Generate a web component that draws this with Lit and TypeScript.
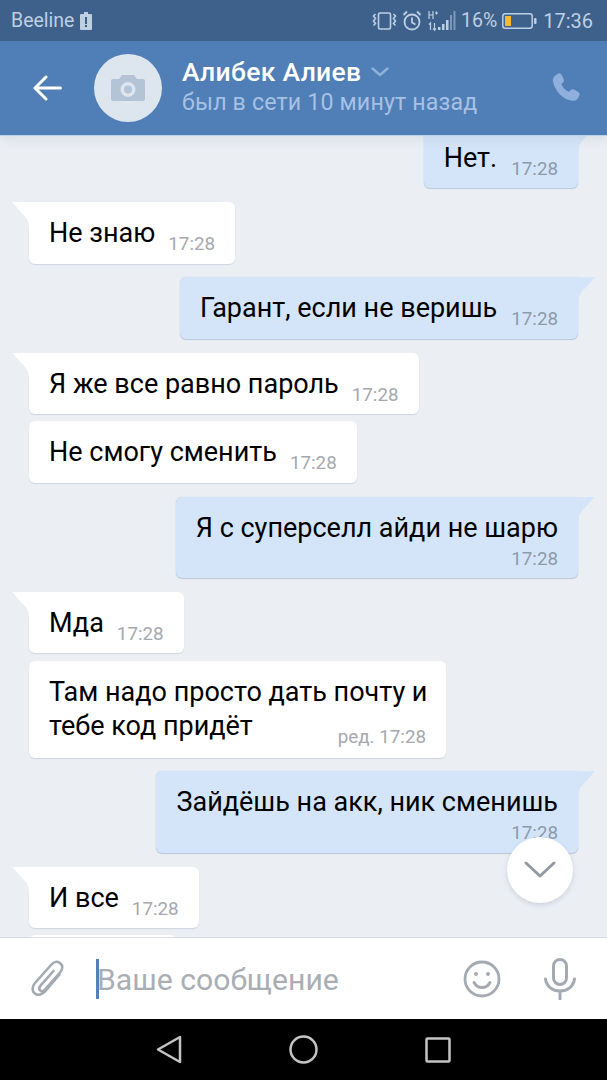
import { LitElement, html, css } from "lit";
import { customElement } from "lit/decorators.js";

type Msg = { out?: boolean; text: string; last?: string; time?: string; tail?: boolean; stack?: boolean; near?: boolean };

const msgs: Msg[] = [
  { out: true, text: "Нет.", tail: true },
  { text: "Не знаю", tail: true },
  { out: true, text: "Гарант, если не веришь", tail: true },
  { text: "Я же все равно пароль", tail: true },
  { text: "Не смогу сменить", near: true },
  { out: true, text: "Я с суперселл айди не шарю", tail: true, stack: true },
  { text: "Мда", tail: true },
  { text: "Там надо просто дать почту и", last: "тебе код придёт", near: true, time: "ред. 17:28" },
  { out: true, text: "Зайдёшь на акк, ник сменишь", tail: true, stack: true },
  { text: "И все", tail: true },
];

@customElement("app-root")
export class AppRoot extends LitElement {
  static styles = css`
    :host { display: block; width: 607px; height: 1080px; font-family: Roboto, "Noto Sans", sans-serif; overflow: hidden; }
    .page { height: 1080px; display: flex; flex-direction: column; background: #ebeff4; }
    .status { height: 41px; flex: none; background: #3e618c; color: #bfcfe2; display: flex; align-items: center; padding: 0 14px 0 11px; font-size: 19.5px; position: relative; z-index: 3; }
    .status svg { display: block; flex: none; }
    .warn { margin-left: 6px; }
    .spacer { flex: 1; }
    .vib { margin-right: 5px; }
    .alarm { margin-right: 6px; }
    .sig { margin-right: 5px; }
    .pct { font-size: 19.5px; margin-right: 5px; }
    .batt { margin-right: 6px; }
    .clock { font-size: 20px; }
    .header { height: 94px; flex: none; background: #507eb7; display: flex; align-items: center; position: relative; z-index: 2; box-shadow: 0 1px 0 #bcd0ea, 0 3px 12px rgba(60, 80, 110, 0.12); padding-left: 33px; box-sizing: border-box; }
    .back { margin-right: 32px; }
    .avatar { width: 68px; height: 68px; border-radius: 50%; background: #dde5ee; display: flex; align-items: center; justify-content: center; margin-right: 20px; flex: none; }
    .who { flex: 1; min-width: 0; margin-top: -2px; }
    .name { display: flex; align-items: center; gap: 10px; color: #fff; font-size: 26.5px; font-weight: 500; line-height: 30px; letter-spacing: 0.3px; }
    .seen { color: #a6c1e3; font-size: 23.2px; line-height: 31px; letter-spacing: 0.15px; }
    .phone { margin-right: 25px; flex: none; }
    .thread { flex: 1; min-height: 0; overflow: hidden; position: relative; }
    .list { display: flex; flex-direction: column; margin-top: -8.25px; padding: 0 29px; }
    .msg { position: relative; box-sizing: border-box; background: #fff; border-radius: 6px; box-shadow: 0 1px 1px rgba(60, 80, 110, 0.16); color: #000; font-size: 27px; line-height: 34px; height: 61.5px; padding: 14px 20px 0 20px; margin-top: 13.75px; align-self: flex-start; display: flex; gap: 13px; }
    .msg.near { margin-top: 7.25px; }
    .msg.first { margin-top: 0; }
    .msg.out { background: #d5e5f9; align-self: flex-end; gap: 14px; box-shadow: 0 1px 1px rgba(90, 120, 160, 0.3), 0 0 1px rgba(90, 120, 160, 0.35); }
    .msg.tail { border-top-left-radius: 0; }
    .msg.out.tail { border-top-left-radius: 6px; border-top-right-radius: 0; }
    .msg.wrap { height: 97px; width: 417px; flex-direction: column; gap: 0; }
    .msg.stack { height: 81.5px; flex-direction: column; gap: 0; }
    .lastrow { display: flex; justify-content: space-between; }
    .tailshape { position: absolute; top: 0; left: -17px; width: 17px; height: 26px; background: #fff; clip-path: polygon(0 0, 100% 0, 100% 100%, 96% 78%, 84% 62%); }
    .out .tailshape { left: auto; right: -17px; background: #d5e5f9; clip-path: polygon(0 0, 100% 0, 16% 62%, 4% 78%, 0 100%); }
    .text { flex: none; white-space: nowrap; }
    .time { flex: none; font-size: 18.8px; line-height: 20px; color: #a5a9ae; margin-top: 18px; white-space: nowrap; }
    .out .time { color: #8b9bab; }
    .stack .time { margin-top: 4px; align-self: flex-end; }
    .ghost { width: 148px; }
    .fab { position: absolute; right: 34px; bottom: 34px; width: 66px; height: 66px; border-radius: 50%; background: #fff; box-shadow: 0 2px 5px rgba(60, 80, 110, 0.18); display: flex; align-items: center; justify-content: center; }
    .inputbar { height: 82px; flex: none; background: #fff; border-top: 1px solid #d9dce0; box-sizing: border-box; display: flex; align-items: center; padding: 0 31px; position: relative; z-index: 1; }
    .clip { margin-right: 31px; }
    .field { flex: 1; display: flex; align-items: center; color: #a9aeb4; font-size: 30.2px; line-height: 40px; }
    .fieldtext { position: relative; top: 1px; }
    .caret { width: 3px; height: 40px; background: #5181b8; margin-right: -2px; flex: none; }
    .smile { margin-right: 43px; }
    .nav { height: 61px; flex: none; background: #000; display: flex; align-items: center; justify-content: center; gap: 107px; }
  `;

  private bubble(m: Msg, first: boolean) {
    const cls = ["msg", m.out ? "out" : "", m.tail ? "tail" : "", m.near ? "near" : "", m.stack ? "stack" : "", m.last ? "wrap" : "", first ? "first" : ""].join(" ");
    const time = html`<span class="time">${m.time ?? "17:28"}</span>`;
    return html`<div class=${cls}>
      ${m.tail ? html`<span class="tailshape"></span>` : ""}
      <span class="text">${m.text}</span>
      ${m.last ? html`<div class="lastrow"><span class="text">${m.last}</span>${time}</div>` : time}
    </div>`;
  }

  render() {
    return html`<div class="page">
      <div class="status">
        <span>Beeline</span>
        <svg class="warn" width="12" height="20" viewBox="0 0 12 20"><path fill="#bfcfe2" d="M4 1h4v2h3a1 1 0 0 1 1 1v14a1 1 0 0 1-1 1H1a1 1 0 0 1-1-1V4a1 1 0 0 1 1-1h3z"/><path fill="#3e618c" d="M5 6h2v7H5zM5 14h2v2H5z"/></svg>
        <span class="spacer"></span>
        <svg class="vib" width="25" height="20" viewBox="0 0 25 20" fill="none" stroke="#bfcfe2" stroke-width="1.6"><rect x="6.500" y="2" width="12" height="16" rx="1.500"/><path d="M3.500 3l-2 2 2 2.500-2 2.500 2 2.500-2 2M21.500 3l2 2-2 2.500 2 2.500-2 2.500 2 2"/></svg>
        <svg class="alarm" width="20" height="21" viewBox="0 0 20 21" fill="none" stroke="#bfcfe2" stroke-width="1.8"><circle cx="10" cy="12" r="7.500"/><path d="M10 7.500V12.500l3.500 2M1.500 5L5 1.500M18.500 5L15 1.500"/></svg>
        <svg class="sig" width="28" height="22" viewBox="0 0 28 22" fill="#bfcfe2"><path d="M1 1v8M5 1v8M1 5h4M7 3h3M8.500 1.500v3" fill="none" stroke="#bfcfe2" stroke-width="1.200"/><path d="M2.500 20v-7l-1.500 1.500M6.500 13v7l-1.500-1.500M6.500 20l1.500-1.500" fill="none" stroke="#bfcfe2" stroke-width="1.200"/><rect x="10" y="17" width="2.500" height="3"/><rect x="14" y="14" width="2.500" height="6"/><rect x="18" y="10" width="2.500" height="10"/><rect x="22" y="5" width="2" height="15" opacity=".5"/><rect x="25.500" y="1" width="2" height="19" opacity=".5"/></svg>
        <span class="pct">16%</span>
        <svg class="batt" width="35" height="16" viewBox="0 0 35 16"><rect x=".8" y=".8" width="29.400" height="14.400" rx="2.500" fill="none" stroke="#bfcfe2" stroke-width="1.500"/><rect x="3" y="3" width="6" height="10" fill="#f5b82e"/><rect x="32" y="5" width="2.500" height="6" rx="1" fill="#bfcfe2"/></svg>
        <span class="clock">17:36</span>
      </div>
      <div class="header">
        <svg class="back" width="29" height="26" viewBox="0 0 29 26" fill="none" stroke="#fff" stroke-width="3" stroke-linecap="round" stroke-linejoin="round"><path d="M27.500 13H2M13 2L2 13l11 11"/></svg>
        <div class="avatar">
          <svg width="34" height="26" viewBox="0 0 34 26"><path fill="#b3c4d6" fill-rule="evenodd" d="M11 0h12l3 4h6a2 2 0 0 1 2 2v18a2 2 0 0 1-2 2H2a2 2 0 0 1-2-2V6a2 2 0 0 1 2-2h6zM17 7a7.500 7.500 0 1 0 0 15 7.500 7.500 0 0 0 0-15zM17 10.500a4 4 0 1 1 0 8 4 4 0 0 1 0-8z"/></svg>
        </div>
        <div class="who">
          <div class="name">Алибек Алиев
            <svg width="18" height="10" viewBox="0 0 18 10" fill="none" stroke="#8fb0d9" stroke-width="2.400" stroke-linecap="round" stroke-linejoin="round"><path d="M1.500 1.500L9 8l7.500-6.500"/></svg>
          </div>
          <div class="seen">был в сети 10 минут назад</div>
        </div>
        <svg class="phone" width="30" height="30" viewBox="2.500 0.500 27 28"><path fill="#8fb0dc" d="M7.500 1.200c1.200-.7 2.700-.3 3.400 1l2 4c.6 1.100.3 2.400-.6 3.200l-1.600 1.300c1.300 3.200 3.900 5.900 7 7.400l1.500-1.600c.8-.9 2.100-1.100 3.200-.5l4.100 2.200c1.200.7 1.600 2.200 1 3.400l-1 1.900c-1.100 2.100-3.400 3.300-5.700 2.900C12.500 25.300 4.800 17.700 2.900 8.400c-.5-2.300.5-4.600 2.600-5.900z"/></svg>
      </div>
      <div class="thread">
        <div class="list">
          ${msgs.map((m, i) => this.bubble(m, i === 0))}
          <div class="msg near ghost"></div>
        </div>
        <div class="fab">
          <svg width="32" height="18" viewBox="0 0 32 18" fill="none" stroke="#949ba3" stroke-width="3" stroke-linecap="round" stroke-linejoin="round"><path d="M2 2l14 13L30 2"/></svg>
        </div>
      </div>
      <div class="inputbar">
        <svg class="clip" width="34" height="38" viewBox="0 0 34 38" fill="none" stroke="#a3aab2" stroke-width="2.600" stroke-linecap="round"><path d="M28.500 14.500L14.500 31c-3.300 3.900-8 5-11 2.300C.8 30.800 1 26.400 4 23L20.500 4.500c2.500-2.800 6-3.500 8.700-1.300 2.800 2.300 2.700 5.800.2 8.800L14 29.500c-1.500 1.700-3.400 2.200-4.800 1-1.400-1.200-1.100-3.100.3-4.800L22.500 11"/></svg>
        <div class="field"><span class="caret"></span><span class="fieldtext">Ваше сообщение</span></div>
        <svg class="smile" width="38" height="38" viewBox="0 0 38 38" fill="none" stroke="#a3aab2" stroke-width="2.800" stroke-linecap="round"><circle cx="19" cy="19" r="17"/><path d="M11 22.500c2 3.800 5 5 8 5s6-1.200 8-5"/><circle cx="13" cy="14" r="2" fill="#a3aab2" stroke="none"/><circle cx="25" cy="14" r="2" fill="#a3aab2" stroke="none"/></svg>
        <svg width="32" height="42" viewBox="0 0 32 42" fill="none" stroke="#a3aab2" stroke-width="3" stroke-linecap="round"><rect x="9.500" y="1.500" width="13" height="25" rx="6.500"/><path d="M1.500 21c1 7.500 7 12 14.500 12s13.500-4.500 14.500-12M16 33v8"/></svg>
      </div>
      <div class="nav">
        <svg width="26" height="29" viewBox="0 0 26 29" fill="none" stroke="#c4c4c4" stroke-width="2.500" stroke-linejoin="round"><path d="M24 2v25L2 14.500z"/></svg>
        <svg width="29" height="29" viewBox="0 0 29 29" fill="none" stroke="#c4c4c4" stroke-width="2.500"><circle cx="14.500" cy="14.500" r="13"/></svg>
        <svg width="26" height="26" viewBox="0 0 26 26" fill="none" stroke="#c4c4c4" stroke-width="2.500" stroke-linejoin="round"><rect x="1.500" y="1.500" width="23" height="23" rx="1"/></svg>
      </div>
    </div>`;
  }
}
